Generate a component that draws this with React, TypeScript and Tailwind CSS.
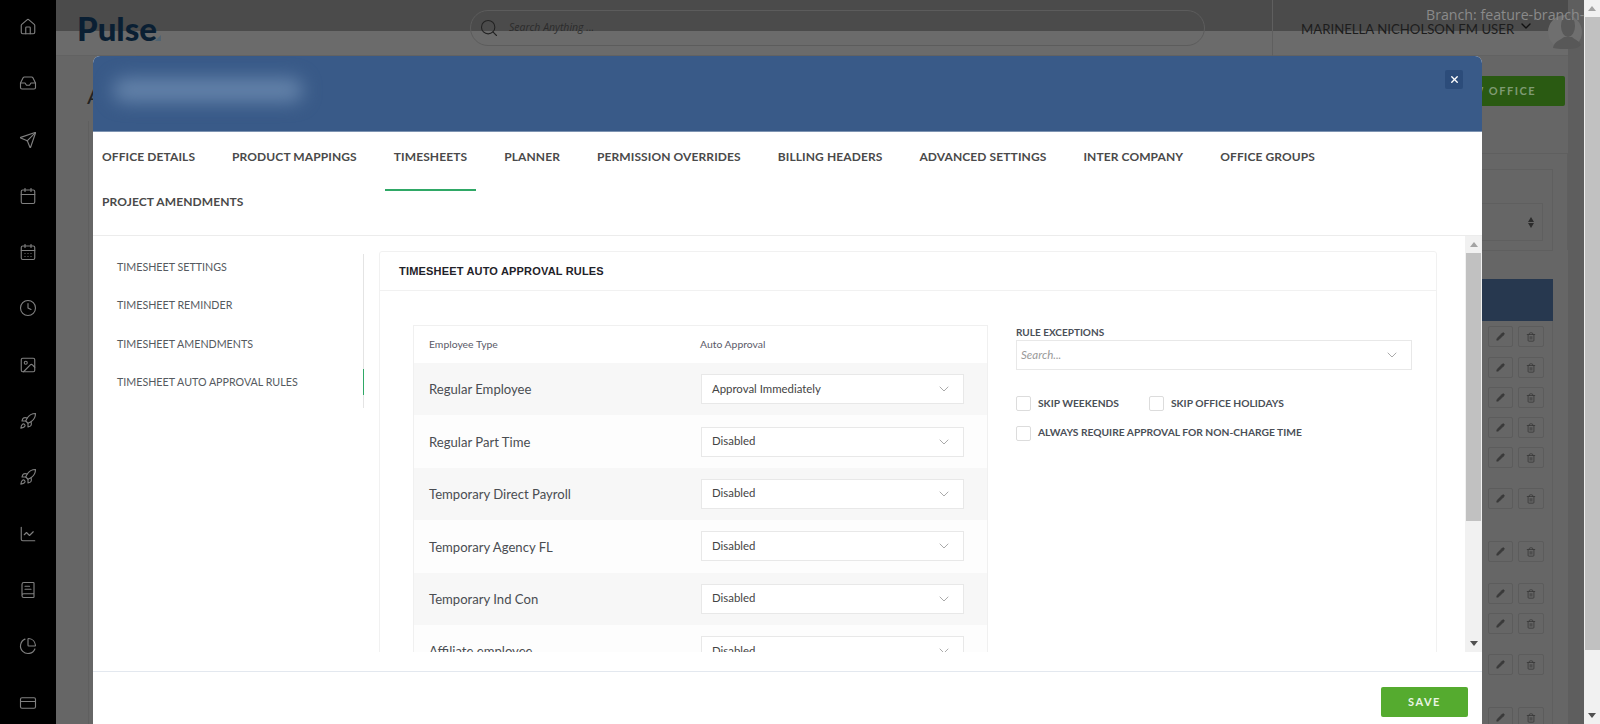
import {
  Home, Inbox, Send, Calendar, CalendarDays, Clock, Image, Rocket, ChartLine, BookText, ChartPie, CreditCard,
  ChevronDown, Search, X, Pencil, Trash2,
} from 'lucide-react'

const navIcons = [Home, Inbox, Send, Calendar, CalendarDays, Clock, Image, Rocket, Rocket, ChartLine, BookText, ChartPie, CreditCard]

const tabRow = ['OFFICE DETAILS', 'PRODUCT MAPPINGS', 'TIMESHEETS', 'PLANNER', 'PERMISSION OVERRIDES', 'BILLING HEADERS', 'ADVANCED SETTINGS', 'INTER COMPANY', 'OFFICE GROUPS', 'PROJECT AMENDMENTS']

const sideLinks = ['TIMESHEET SETTINGS', 'TIMESHEET REMINDER', 'TIMESHEET AMENDMENTS', 'TIMESHEET AUTO APPROVAL RULES']

const employeeRows = [
  { name: 'Regular Employee', value: 'Approval Immediately' },
  { name: 'Regular Part Time', value: 'Disabled' },
  { name: 'Temporary Direct Payroll', value: 'Disabled' },
  { name: 'Temporary Agency FL', value: 'Disabled' },
  { name: 'Temporary Ind Con', value: 'Disabled' },
  { name: 'Affiliate employee', value: 'Disabled' },
]

// top gap of each action row behind the overlay
const actionRowGaps = ['mt-[5px]', 'mt-[10px]', 'mt-[9px]', 'mt-[9px]', 'mt-[9px]', 'mt-[20px]', 'mt-[32px]', 'mt-[21px]', 'mt-[9px]', 'mt-[20px]', 'mt-[32px]']

function Scrollbar({ className, thumb }: { className: string; thumb: string }) {
  return (
    <div className={`flex flex-col items-center bg-[#f1f1f1] ${className}`}>
      <div className="flex h-[17px] shrink-0 items-center justify-center">
        <div className="h-0 w-0 border-x-[4px] border-b-[5px] border-x-transparent border-b-[#a3a3a3]" />
      </div>
      <div className={`w-[15px] bg-[#c1c1c1] ${thumb}`} />
      <div className="flex-1" />
      <div className="flex h-[17px] shrink-0 items-center justify-center">
        <div className="h-0 w-0 border-x-[4px] border-t-[5px] border-x-transparent border-t-[#505050]" />
      </div>
    </div>
  )
}

function Checkbox({ label }: { label: string }) {
  return (
    <label className="flex items-center gap-[7px]">
      <span className="h-[15px] w-[15px] rounded-[2px] border border-[#dcdcdc] bg-white" />
      <span className="text-[10.25px] font-bold text-[#4a4f57]">{label}</span>
    </label>
  )
}

function Backdrop() {
  return (
    <div className="flex h-full flex-1 flex-col overflow-hidden bg-[#666666]">
      <div className="h-[31px] shrink-0 bg-[#4b4b4b]" />
      <div className="h-[25px] shrink-0 border-b border-[#626262] bg-[#6b6b6b]" />
      <div className="flex min-h-0 flex-1 flex-col items-end">
        <div className="mr-[3px] mt-[20px] h-[30px] w-[120px] shrink-0 rounded-[2px] bg-[#2a5a12] pr-[29px] text-right text-[11px] font-bold leading-[30px] tracking-[1.5px] text-[#7f9a72]">
          W OFFICE
        </div>
        {/* filter panel, mostly hidden by the modal */}
        <div className="mt-[47px] h-[97px] w-[100px] shrink-0 border-r border-t border-[#5f5f5f] pt-[15px]">
          <div className="h-[82px] w-[85px] border-b border-r border-t border-[#5f5f5f] pt-[33px]">
            <div className="flex h-[38px] w-[75px] items-center justify-end border-b border-r border-t border-[#5f5f5f] pr-[8px]">
              <div className="flex flex-col gap-[1px]">
                <div className="h-0 w-0 border-x-[3px] border-b-[5px] border-x-transparent border-b-[#2c2c2c]" />
                <div className="h-0 w-0 border-x-[3px] border-t-[5px] border-x-transparent border-t-[#2c2c2c]" />
              </div>
            </div>
          </div>
        </div>
        <div className="mr-[15px] mt-[29px] h-[42px] w-[71px] shrink-0 bg-[#27384f]" />
        <div className="mr-[15px] flex w-[71px] flex-1 flex-col border-r border-[#5f5f5f] pl-[6px]">
          {actionRowGaps.map((gap, i) => (
            <div key={i} className={`flex shrink-0 gap-[5px] ${gap}`}>
              <div className="flex h-[21px] w-[25px] items-center justify-center rounded-[2px] border border-[#5c5c5c]">
                <Pencil className="h-[9px] w-[9px] text-[#3a3a3a]" fill="#3a3a3a" />
              </div>
              <div className="flex h-[21px] w-[26px] items-center justify-center rounded-[2px] border border-[#5c5c5c]">
                <Trash2 className="h-[10px] w-[10px] text-[#3a3a3a]" />
              </div>
            </div>
          ))}
        </div>
      </div>
    </div>
  )
}

export default function App() {
  return (
    <div className="relative flex h-[724px] w-[1600px] overflow-hidden font-['Lato',sans-serif]">
      {/* left rail */}
      <aside className="flex w-[56px] shrink-0 flex-col items-center gap-[38.3px] bg-black pt-[18px]">
        {navIcons.map((Icon, i) => (
          <Icon key={i} className="h-[18px] w-[18px] text-[#808080]" strokeWidth={1.5} />
        ))}
      </aside>

      <Backdrop />

      <div className="w-[16px] shrink-0 bg-[#5e5e5e]" />
      <Scrollbar className="h-full w-[16px] shrink-0" thumb="h-[633px]" />

      {/* top bar items behind the modal */}
      <div className="absolute left-[77px] top-[10px] text-[33px] font-black leading-[36px] text-[#0a1f33]">Pulse</div>
      <div className="absolute left-[155px] top-[35px] h-0 w-0 border-b-[6px] border-l-[6px] border-b-[#4f6270] border-l-transparent" />
      <div className="absolute left-[470px] top-[10px] flex h-[36px] w-[735px] items-center gap-[10px] rounded-full border border-[#5c5c5c] pl-[8px]">
        <Search className="h-[20px] w-[20px] text-[#222]" strokeWidth={1.3} />
        <span className="font-['Open_Sans',sans-serif] text-[10.5px] italic text-[#2b2b2b]">Search Anything ...</span>
      </div>
      <div className="absolute left-[1272px] top-0 h-[56px] w-px bg-[#5f5f5f]" />
      <svg className="absolute left-[1548px] top-[15px] h-[34px] w-[34px]" viewBox="0 0 34 34">
        <circle cx="17" cy="17" r="17" fill="#6f6f6f" />
        <ellipse cx="20" cy="11" rx="7" ry="11" fill="#585858" />
        <path d="M5 33c1-7 8-8 11-11h8c3 3 8 4 9 8-3 3-7 4-12 4-6 0-12-0-16-1z" fill="#585858" />
      </svg>
      <div className="absolute left-[1426px] top-[3px] font-['Open_Sans',sans-serif] text-[14.2px] leading-[24px] text-[#8a8a8a]">Branch: feature-branch-</div>
      <div className="absolute left-[1301px] top-[20px] flex items-center gap-[4px] text-[13.2px] leading-[18px] text-[#1d1d1d]">
        MARINELLA NICHOLSON FM USER
        <ChevronDown className="mt-[-6px] h-[16px] w-[16px] text-[#111]" strokeWidth={2} />
      </div>
      <div className="absolute left-[87px] top-[79px] text-[22px] text-[#222]">A</div>
      <div className="absolute bottom-0 left-[88px] top-[121px] w-px bg-[#5f5f5f]" />

      {/* modal */}
      <div className="absolute left-[93px] top-[56px] flex h-[668px] w-[1389px] flex-col overflow-hidden rounded-t-[7px] bg-white">
        <header className="relative h-[76px] shrink-0 border-b border-[#7d93b1] bg-[#395a88]">
          <div className="absolute left-[20px] top-[22px] h-[24px] w-[190px] rounded-full bg-[#6483aa] blur-[9px]" />
          <button className="absolute right-[19px] top-[14px] flex h-[19px] w-[18px] items-center justify-center rounded-[2px] bg-[#2c4c7a]">
            <X className="h-[11px] w-[11px] text-white" strokeWidth={3} />
          </button>
        </header>

        <nav className="flex h-[104px] shrink-0 flex-wrap content-start border-b border-[#ececec] pt-[2px]">
          {tabRow.map((tab) => (
            <div
              key={tab}
              className={`relative flex h-[45px] items-center px-[9px] text-[12px] font-bold tracking-[0.1px] text-[#4a4a4a] ${tab === 'PROJECT AMENDMENTS' ? 'mr-[600px]' : 'mr-[19px]'}`}
            >
              {tab}
              {tab === 'TIMESHEETS' && <span className="absolute inset-x-0 bottom-[-12px] h-[2px] bg-[#2fa866]" />}
            </div>
          ))}
        </nav>

        <div className="flex h-[416px] shrink-0">
          <div className="w-[271px] shrink-0">
            <ul className="mt-[18px] flex h-[154px] flex-col gap-[12.4px] border-r border-[#e4e4e4] pb-[13px]">
              {sideLinks.map((link, i) => (
                <li
                  key={link}
                  className={`-mr-px flex h-[26px] items-center pl-[24px] text-[10.7px] text-[#555a60] ${i === 3 ? 'border-r border-[#2fa866]' : ''}`}
                >
                  {link}
                </li>
              ))}
            </ul>
          </div>

          <div className="min-w-0 flex-1 overflow-hidden pl-[15px] pr-[28px] pt-[15px]">
            <section className="h-[600px] rounded-[3px] border border-[#f1f1f1]">
              <h2 className="flex h-[39px] items-center border-b border-[#f1f1f1] pl-[19px] font-['Liberation_Sans',sans-serif] text-[11px] font-bold tracking-[0.18px] text-[#1f2229]">
                TIMESHEET AUTO APPROVAL RULES
              </h2>
              <div className="flex pl-[33px] pt-[34px]">
                <div className="w-[575px] shrink-0 border border-[#f0f0f0]">
                  <div className="flex h-[37px] items-center pl-[15px] text-[10.4px] text-[#5a5a68]">
                    <span className="w-[271px]">Employee Type</span>
                    <span>Auto Approval</span>
                  </div>
                  {employeeRows.map((row, i) => (
                    <div key={row.name} className={`flex h-[52.4px] items-center pl-[15px] ${i % 2 === 0 ? 'bg-[#f7f7f7]' : 'bg-[#fdfdfd]'}`}>
                      <span className="mt-[2px] w-[272px] text-[13.1px] text-[#4a4d52]">{row.name}</span>
                      <div className="flex h-[30px] w-[263px] items-center justify-between border border-[#e8e8e8] bg-white pl-[10px] pr-[11px]">
                        <span className="mt-[-2px] text-[11.4px] text-[#444]">{row.value}</span>
                        <ChevronDown className="h-[16px] w-[16px] text-[#8a8a8a]" strokeWidth={1.1} />
                      </div>
                    </div>
                  ))}
                </div>

                <div className="ml-[28px] w-[396px] shrink-0">
                  <div className="text-[10px] font-bold leading-[15px] text-[#4a4f57]">RULE EXCEPTIONS</div>
                  <div className="flex h-[30px] items-center justify-between border border-[#e8e8e8] pl-[4px] pr-[11px]">
                    <span className="text-[11.5px] italic text-[#9a9a9a]">Search...</span>
                    <ChevronDown className="h-[16px] w-[16px] text-[#8a8a8a]" strokeWidth={1.1} />
                  </div>
                  <div className="mt-[26px] flex gap-[30px]">
                    <Checkbox label="SKIP WEEKENDS" />
                    <Checkbox label="SKIP OFFICE HOLIDAYS" />
                  </div>
                  <div className="mt-[14px]">
                    <Checkbox label="ALWAYS REQUIRE APPROVAL FOR NON-CHARGE TIME" />
                  </div>
                </div>
              </div>
            </section>
          </div>

          <Scrollbar className="h-full w-[17px] shrink-0" thumb="h-[268px]" />
        </div>

        <div className="h-[20px] shrink-0 border-b border-[#e3e8ef]" />
        <footer className="flex flex-1 justify-end pr-[14px] pt-[15px]">
          <button className="h-[30px] w-[87px] rounded-[2px] bg-[#55ab2f] text-[11px] font-bold tracking-[1.5px] text-[#eaf5e4]">SAVE</button>
        </footer>
      </div>
    </div>
  )
}
